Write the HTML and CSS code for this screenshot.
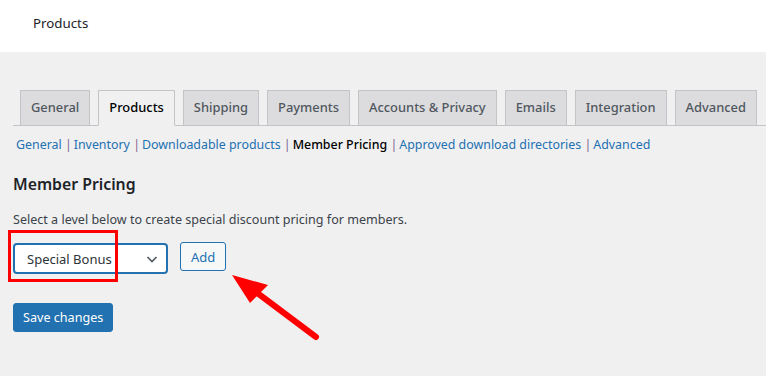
FILE: index.html
```html
<!DOCTYPE html>
<html lang="en">
<head>
    <meta charset="UTF-8">
    <title>Products ‹ Settings</title>
    <link rel="stylesheet" href="styles.css">
</head>
<body>
    <div class="page-header">
        <h1>Products</h1>
    </div>

    <div class="wrap">
        <nav class="nav-tabs">
            <a class="nav-tab" href="#">General</a>
            <a class="nav-tab active" href="#">Products</a>
            <a class="nav-tab" href="#">Shipping</a>
            <a class="nav-tab" href="#">Payments</a>
            <a class="nav-tab" href="#">Accounts &amp; Privacy</a>
            <a class="nav-tab" href="#">Emails</a>
            <a class="nav-tab" href="#">Integration</a>
            <a class="nav-tab" href="#">Advanced</a>
        </nav>

        <ul class="subsubsub">
            <li><a href="#">General</a> <span class="sep">|</span></li>
            <li><a href="#">Inventory</a> <span class="sep">|</span></li>
            <li><a href="#">Downloadable products</a> <span class="sep">|</span></li>
            <li><a class="current" href="#">Member Pricing</a> <span class="sep">|</span></li>
            <li><a href="#">Approved download directories</a> <span class="sep">|</span></li>
            <li><a href="#">Advanced</a></li>
        </ul>

        <h2 class="section-title">Member Pricing</h2>
        <p class="section-desc">Select a level below to create special discount pricing for members.</p>

        <div class="level-row">
            <div class="select-box">
                <span>Special Bonus</span>
                <svg class="chevron" width="14" height="14" viewBox="0 0 14 14">
                    <path d="M2.5 5 L7 9.5 L11.5 5" fill="none" stroke="#50575e" stroke-width="1.6"/>
                </svg>
            </div>
            <button class="btn-secondary">Add</button>
        </div>

        <button class="btn-primary">Save changes</button>
    </div>

    <!-- annotation layer -->
    <svg class="annotations" width="766" height="376" viewBox="0 0 766 376">
        <rect x="9.5" y="231.5" width="107" height="49" fill="none" stroke="#ff0000" stroke-width="3"/>
        <line x1="316" y1="337" x2="256" y2="292" stroke="#ff0000" stroke-width="6" stroke-linecap="round"/>
        <polygon points="232,275 268,285 250,303" fill="#ff0000"/>
    </svg>
</body>
</html>
```

FILE: styles.css
```css
* {
    margin: 0;
    padding: 0;
    box-sizing: border-box;
}

body {
    font-family: "Noto Sans", "Open Sans", sans-serif;
    font-size: 12.6px;
    color: #3c434a;
    background-color: #f0f0f1;
    width: 766px;
    height: 376px;
    overflow: hidden;
    position: relative;
}

a {
    text-decoration: none;
}

/* Header */
.page-header {
    background-color: #fff;
    height: 52px;
    padding: 14px 0 0 33px;
}

.page-header h1 {
    font-size: 13.3px;
    font-weight: 400;
    color: #1d2327;
    line-height: 18px;
}

.wrap {
    padding: 38px 0 0 13px;
}

/* Tabs */
.nav-tabs {
    display: flex;
    gap: 8px;
    padding-left: 7px;
    border-bottom: 1px solid #c3c4c7;
    height: 36px;
}

.nav-tab {
    height: 36px;
    padding: 0 10px;
    border: 1px solid #c3c4c7;
    background-color: #dcdcde;
    color: #50575e;
    font-size: 12.9px;
    font-weight: 500;
    line-height: 33px;
    white-space: nowrap;
}

.nav-tab.active {
    background-color: #f0f0f1;
    border-bottom-color: #f0f0f1;
    color: #000;
}

/* Sub navigation */
.subsubsub {
    list-style: none;
    display: flex;
    margin-top: 10px;
    padding-left: 3px;
    line-height: 18px;
    font-size: 12.4px;
}

.subsubsub li {
    white-space: pre;
}

.subsubsub a {
    color: #2271b1;
}

.subsubsub a.current {
    color: #000;
    font-weight: 500;
}

.subsubsub .sep {
    color: #7e6290;
    margin-right: 2px;
}

/* Section */
.section-title {
    font-size: 15.8px;
    font-weight: 600;
    color: #1d2327;
    margin-top: 19px;
    line-height: 22px;
}

.section-desc {
    margin-top: 16px;
    line-height: 18px;
    font-size: 12.55px;
    color: #3c434a;
}

.level-row {
    display: flex;
    align-items: flex-start;
    gap: 12px;
    margin-top: 14px;
}

.select-box {
    width: 155px;
    height: 31px;
    border: 2px solid #2271b1;
    border-radius: 4px;
    background-color: #fff;
    color: #2c3338;
    display: flex;
    align-items: center;
    justify-content: space-between;
    padding: 0 7px 0 12px;
    font-size: 13px;
}

.chevron {
    display: block;
}

.btn-secondary {
    height: 29px;
    padding: 0 10px;
    margin-top: -1px;
    border: 1px solid #2271b1;
    border-radius: 3px;
    background-color: #f6f7f7;
    color: #2271b1;
    font-family: inherit;
    font-size: 13px;
}

.btn-primary {
    display: block;
    margin-top: 29px;
    height: 29px;
    padding: 0 9px;
    border: 1px solid #2271b1;
    border-radius: 3px;
    background-color: #2271b1;
    color: #fff;
    font-family: inherit;
    font-size: 12.6px;
}

.annotations {
    position: absolute;
    top: 0;
    left: 0;
    pointer-events: none;
}
```
